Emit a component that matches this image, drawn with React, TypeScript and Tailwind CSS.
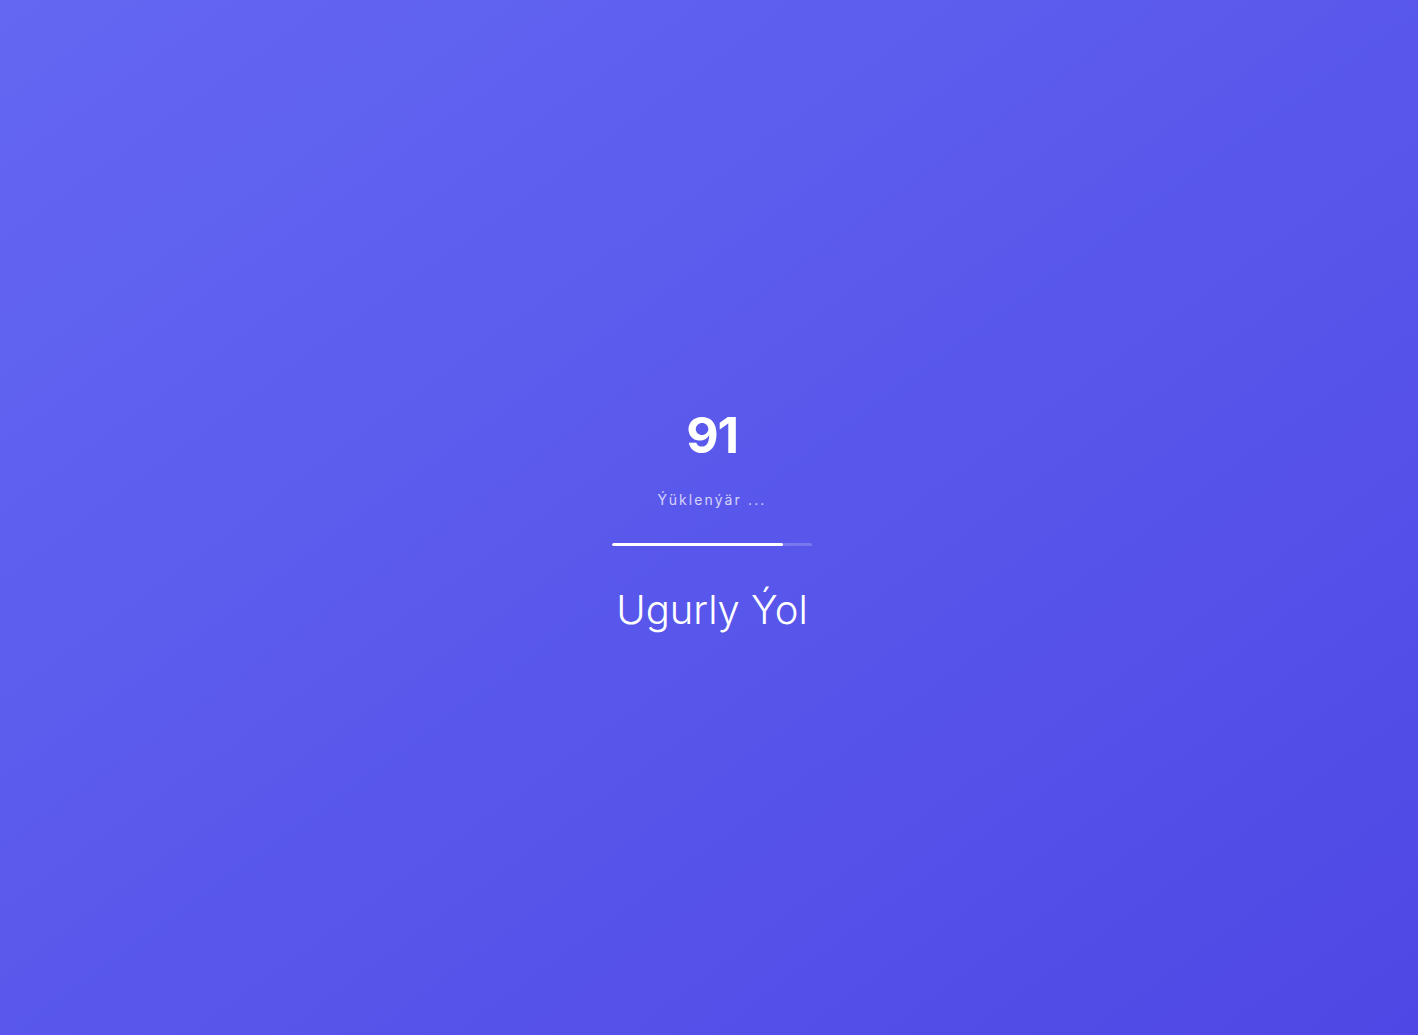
import React from 'react';

const progress = 85.5;

const App = () => {
	return (
		<main
			className="flex min-h-screen w-full flex-col items-center justify-center bg-gradient-to-br from-[#6467f2] to-[#4f47e5] pl-[6px] pt-[4px] text-white"
			style={{ fontFamily: 'Inter, "Noto Sans", sans-serif' }}
		>
			<div className="flex flex-col items-center">
				<h1 className="text-[50px] font-bold leading-none tracking-tight">91</h1>
				<p className="mt-[30px] text-sm tracking-[0.15em] text-white/75">Ýüklenýär ...</p>
				<div className="mt-[33px] h-[3px] w-[200px] overflow-hidden rounded-full bg-white/20">
					<div className="h-full rounded-full bg-white" style={{ width: `${progress}%` }} />
				</div>
				<h2 className="mt-[44px] text-[40px] font-light leading-none">Ugurly Ýol</h2>
			</div>
		</main>
	);
};

export default App;
